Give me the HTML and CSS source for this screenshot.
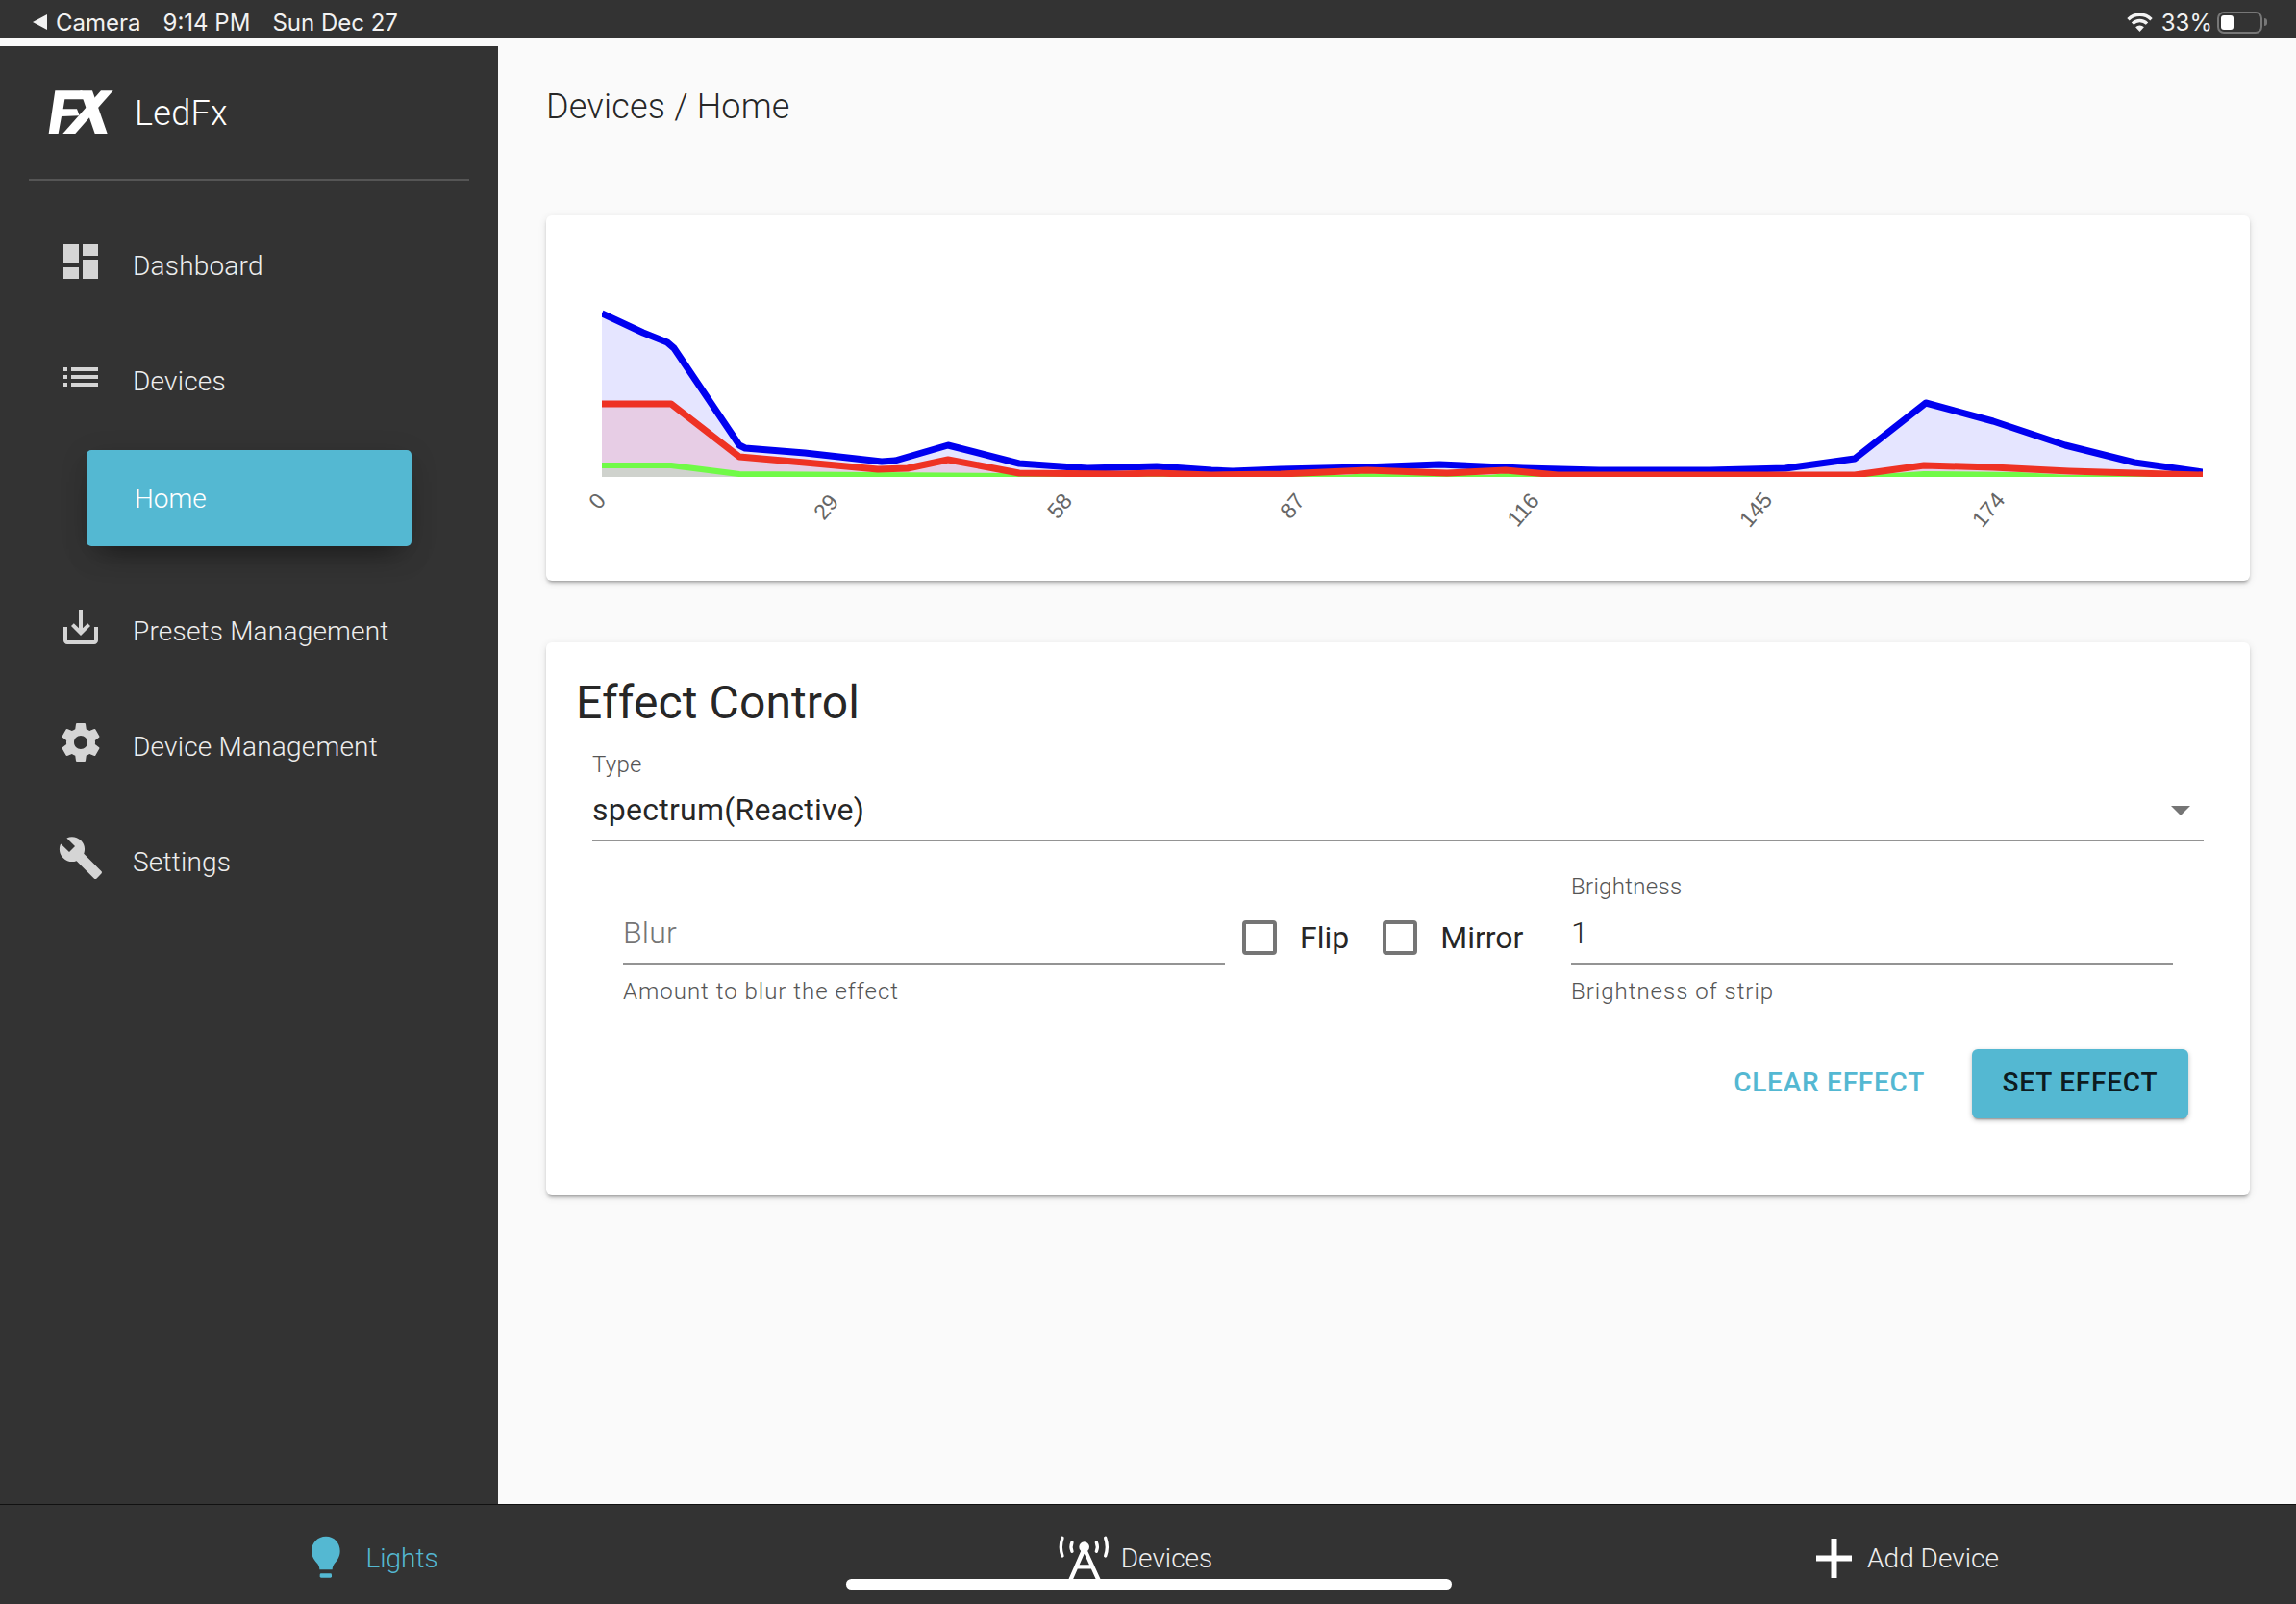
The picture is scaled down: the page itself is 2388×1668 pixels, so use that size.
FILE: index.html
```html
<!DOCTYPE html>
<html lang="en">
<head>
  <meta charset="UTF-8" />
  <meta name="viewport" content="width=device-width, initial-scale=1.0" />
  <title>LedFx</title>
  <link rel="stylesheet" href="styles.css">
</head>
<body>

  <div class="status-bar">
    <div class="status-left">
      <svg class="back-arrow" viewBox="0 0 15 16"><polygon points="15,0 15,16 0,8" /></svg>
      <span class="status-camera">Camera</span>
      <span class="status-time">9:14 PM</span>
      <span class="status-date">Sun Dec 27</span>
    </div>
    <div class="status-right">
      <svg class="wifi" viewBox="0 0 27 20">
        <path d="M1.5 7.2a17 17 0 0 1 24 0" />
        <path d="M6 11.6a10.6 10.6 0 0 1 15 0" />
        <path d="M13.5 20l-4.4-4.7a6.2 6.2 0 0 1 8.8 0z" class="wifi-dot" />
      </svg>
      <span>33%</span>
      <div class="battery"><div class="battery-level"></div></div>
      <div class="battery-nub"></div>
    </div>
  </div>

  <div class="layout">
    <div class="sidebar">
      <div class="logo-row">
        <svg class="logo" viewBox="0 0 270 195">
          <polygon points="52,28 136,28 146,55 82,55 77,85 120,85 128,106 72,108 62,162 32,162" />
          <polygon points="130,28 168,28 215,162 176,162" />
          <polygon points="195,28 233,28 115,162 76,162" />
        </svg>
        <span class="logo-text">LedFx</span>
      </div>
      <div class="divider"></div>

      <div class="nav">
        <div class="nav-item">
          <svg class="nav-icon" viewBox="0 0 24 24"><path d="M3 13h8V3H3v10zm0 8h8v-6H3v6zm10 0h8V11h-8v10zm0-18v6h8V3h-8z" /></svg>
          <span>Dashboard</span>
        </div>
        <div class="nav-item">
          <svg class="nav-icon" viewBox="0 0 24 24"><path d="M3 13h2v-2H3v2zm0 4h2v-2H3v2zm0-8h2V7H3v2zm4 4h14v-2H7v2zm0 4h14v-2H7v2zM7 7v2h14V7H7z" /></svg>
          <span>Devices</span>
        </div>
        <div class="nav-sub">Home</div>
        <div class="nav-item">
          <svg class="nav-icon" viewBox="0 0 24 24"><path d="M19 12v7H5v-7H3v7c0 1.1.9 2 2 2h14c1.1 0 2-.9 2-2v-7h-2zm-6 .67l2.59-2.58L17 11.5l-5 5-5-5 1.41-1.41L11 12.67V3h2z" /></svg>
          <span>Presets Management</span>
        </div>
        <div class="nav-item">
          <svg class="nav-icon" viewBox="0 0 24 24"><path d="M19.43 12.98c.04-.32.07-.64.07-.98s-.03-.66-.07-.98l2.11-1.65c.19-.15.24-.42.12-.64l-2-3.46c-.12-.22-.39-.3-.61-.22l-2.49 1c-.52-.4-1.08-.73-1.69-.98l-.38-2.65C14.46 2.18 14.25 2 14 2h-4c-.25 0-.46.18-.49.42l-.38 2.65c-.61.25-1.17.59-1.69.98l-2.49-1c-.23-.09-.49 0-.61.22l-2 3.46c-.13.22-.07.49.12.64l2.11 1.65c-.04.32-.07.65-.07.98s.03.66.07.98l-2.11 1.65c-.19.15-.24.42-.12.64l2 3.46c.12.22.39.3.61.22l2.49-1c.52.4 1.08.73 1.69.98l.38 2.65c.03.24.24.42.49.42h4c.25 0 .46-.18.49-.42l.38-2.65c.61-.25 1.17-.59 1.69-.98l2.49 1c.23.09.49 0 .61-.22l2-3.46c.12-.22.07-.49-.12-.64l-2.11-1.65zM12 15.5c-1.93 0-3.5-1.57-3.5-3.5s1.57-3.5 3.5-3.5 3.5 1.57 3.5 3.5-1.57 3.5-3.5 3.5z" /></svg>
          <span>Device Management</span>
        </div>
        <div class="nav-item">
          <svg class="nav-icon" viewBox="0 0 24 24"><path d="M22.7 19l-9.1-9.1c.9-2.3.4-5-1.5-6.9-2-2-5-2.4-7.4-1.3L9 6 6 9 1.6 4.7C.4 7.1.9 10.1 2.9 12.1c1.9 1.9 4.6 2.4 6.9 1.5l9.1 9.1c.4.4 1 .4 1.4 0l2.3-2.3c.5-.4.5-1.1.1-1.4z" /></svg>
          <span>Settings</span>
        </div>
      </div>
    </div>

    <div class="main">
      <div class="page-title">Devices / Home</div>

      <div class="card chart-card">
        <!-- viewBox uses page coordinates, easier to read the points off -->
        <svg class="chart" viewBox="568 224 1772 380">
          <defs>
            <clipPath id="plot"><rect x="626" y="240" width="1665" height="256" /></clipPath>
          </defs>
          <g clip-path="url(#plot)">
            <polygon class="fill-blue" points="626,326 669,346 694,356 701,362 769,463 775,466 837,471 917,480 931,479 986,463 1060,482 1131,487 1203,485 1260,489 1282,490 1332,488 1418,486 1497,483 1584,487 1663,489 1778,489 1857,487 1929,477 2003,419 2073,438 2148,463 2220,481 2291,491 2291,496 626,496" />
            <polygon class="fill-red" points="626,420 698,420 769,475 837,481 913,488 944,487 986,478 1060,492 1163,493 1203,492 1260,494 1332,493 1422,489 1505,492 1566,489 1620,494 1929,494 2001,484 2073,486 2152,490 2291,494 2291,496 626,496" />
            <polygon class="fill-green" points="626,484 698,484 769,493 1051,495 1060,496 1400,496 1420,494 1480,496 1550,496 1566,494 1600,496 1940,496 2001,492 2100,493 2152,496 626,496" />
            <polyline class="line line-blue" points="626,326 669,346 694,356 701,362 769,463 775,466 837,471 917,480 931,479 986,463 1060,482 1131,487 1203,485 1260,489 1282,490 1332,488 1418,486 1497,483 1584,487 1663,489 1778,489 1857,487 1929,477 2003,419 2073,438 2148,463 2220,481 2291,491" />
            <polyline class="line line-green" points="626,484 698,484 769,493 1051,495 1060,497 1400,497 1420,495 1480,497 1550,497 1566,495 1600,497 1940,497 2001,493 2100,494 2152,497 2291,497" />
            <polyline class="line line-red" points="626,420 698,420 769,475 837,481 913,488 944,487 986,478 1060,492 1163,493 1203,492 1260,494 1332,493 1422,489 1505,492 1566,489 1620,494 1929,494 2001,484 2073,486 2152,490 2291,494" />
          </g>
          <text class="tick" transform="translate(621 521) rotate(-50)">0</text>
          <text class="tick" transform="translate(859 527) rotate(-50)">29</text>
          <text class="tick" transform="translate(1102 526) rotate(-50)">58</text>
          <text class="tick" transform="translate(1344 526) rotate(-50)">87</text>
          <text class="tick" transform="translate(1584 530) rotate(-50)">116</text>
          <text class="tick" transform="translate(1826 530) rotate(-50)">145</text>
          <text class="tick" transform="translate(2068 530) rotate(-50)">174</text>
        </svg>
      </div>

      <div class="card effect-card">
        <h2 class="effect-title">Effect Control</h2>

        <div class="type-field">
          <div class="field-label">Type</div>
          <div class="select-row">
            <span>spectrum(Reactive)</span>
            <div class="select-arrow"></div>
          </div>
        </div>

        <div class="schema-row">
          <div class="field">
            <div class="field-label">&nbsp;</div>
            <div class="field-input placeholder">Blur</div>
            <div class="field-help">Amount to blur the effect</div>
          </div>
          <div class="checks">
            <div class="check-item"><div class="check-box"></div><span>Flip</span></div>
            <div class="check-item"><div class="check-box"></div><span>Mirror</span></div>
          </div>
          <div class="field">
            <div class="field-label">Brightness</div>
            <div class="field-input">1</div>
            <div class="field-help">Brightness of strip</div>
          </div>
        </div>

        <div class="actions">
          <button class="btn-text">CLEAR EFFECT</button>
          <button class="btn-set">SET EFFECT</button>
        </div>
      </div>
    </div>
  </div>

  <div class="bottom-bar">
    <div class="tab tab-active tab-lights">
      <svg class="tab-bulb" viewBox="0 0 150 165">
        <path d="M72 14C46 14 27 34 27 60C27 78 38 90 46 100C50 106 52 112 52 118H92C92 112 94 106 98 100C106 90 116 78 116 60C116 34 98 14 72 14Z" />
        <rect x="53" y="130" width="37" height="13" rx="4" />
      </svg>
      <span>Lights</span>
    </div>
    <div class="tab tab-devices">
      <svg class="tab-tower" viewBox="0 0 210 180">
        <circle cx="110" cy="50" r="16" />
        <path class="tower-legs" d="M110 55L62 165M110 55L160 165M84 112H136" />
        <path class="tower-signal" d="M72 36Q66 50 72 64M148 36Q154 50 148 64M42 22Q32 50 42 78M176 22Q186 50 176 78" />
      </svg>
      <span>Devices</span>
    </div>
    <div class="tab tab-add">
      <svg class="tab-plus" viewBox="0 0 37 41"><path d="M15.5 0h6v17.5H37v6H21.5V41h-6V23.5H0v-6h15.5z" /></svg>
      <span>Add Device</span>
    </div>
  </div>

  <div class="home-indicator"></div>

</body>
</html>
```

FILE: styles.css
```css
body {
  margin: 0;
  width: 2388px;
  height: 1668px;
  display: flex;
  flex-direction: column;
  overflow: hidden;
  position: relative;
  font-family: Roboto, "Liberation Sans", sans-serif;
  background-color: #fafafa;
  color: rgba(0, 0, 0, 0.87);
}

/* status bar */
.status-bar {
  height: 40px;
  flex-shrink: 0;
  display: flex;
  justify-content: space-between;
  align-items: center;
  padding: 0 30px 0 34px;
  background-color: #333;
  color: #f2f2f2;
  font-family: Inter, "Liberation Sans", sans-serif;
  font-size: 24px;
}
.status-left {
  display: flex;
  align-items: center;
  padding-top: 6px;
}
.back-arrow {
  width: 15px;
  height: 16px;
  fill: #f2f2f2;
  margin-right: 9px;
}
.status-time {
  margin-left: 23px;
}
.status-date {
  margin-left: 23px;
}
.status-right {
  display: flex;
  align-items: center;
  padding-top: 6px;
}
.wifi {
  width: 27px;
  height: 20px;
  margin-right: 9px;
  fill: none;
  stroke: #f2f2f2;
  stroke-width: 3.4;
}
.wifi-dot {
  fill: #f2f2f2;
  stroke: none;
}
.battery {
  width: 47px;
  height: 23px;
  box-sizing: border-box;
  margin-left: 5px;
  padding: 2px;
  border: 2px solid #777;
  border-radius: 7px;
}
.battery-level {
  width: 13px;
  height: 15px;
  background-color: #fff;
  border-radius: 3px;
}
.battery-nub {
  width: 3px;
  height: 8px;
  margin-left: 2px;
  background-color: #777;
  border-radius: 0 3px 3px 0;
}

.layout {
  flex: 1;
  display: flex;
  min-height: 0;
}

/* sidebar */
.sidebar {
  width: 518px;
  flex-shrink: 0;
  margin-top: 8px;
  background-color: #333;
  color: #eee;
}
.logo-row {
  height: 138px;
  display: flex;
  align-items: center;
  padding-left: 40px;
}
.logo {
  width: 90px;
  height: 65px;
  fill: #fff;
  margin-right: 10px;
}
.logo-text {
  font-size: 36px;
  color: #fff;
  font-weight: 300;
  letter-spacing: 0.3px;
  margin-top: 2px;
}
.divider {
  height: 2px;
  margin: 0 30px;
  background-color: #555;
}
.nav {
  padding-top: 38px;
}
.nav-item {
  height: 100px;
  margin-bottom: 20px;
  padding-left: 60px;
  display: flex;
  align-items: center;
  font-size: 28px;
  font-weight: 300;
  letter-spacing: 0.2px;
}
.nav-item span {
  margin-left: 30px;
}
.nav-icon {
  width: 48px;
  height: 48px;
  fill: #d5d5d5;
  margin-top: -8px;
}
.nav-sub {
  height: 100px;
  margin: 22px 90px 38px 90px;
  padding-left: 50px;
  display: flex;
  align-items: center;
  background-color: #54b8d2;
  border-radius: 5px;
  color: #fff;
  font-size: 28px;
  font-weight: 300;
  box-shadow: 0 18px 30px -15px rgba(0, 0, 0, 0.5), 0 6px 30px 0 rgba(0, 0, 0, 0.12);
}

/* main content */
.main {
  flex: 1;
  min-width: 0;
  padding: 47px 48px 0 50px;
}
.page-title {
  height: 48px;
  line-height: 48px;
  margin-bottom: 89px;
  font-size: 36px;
  font-weight: 300;
  letter-spacing: 0.2px;
}
.card {
  background-color: #fff;
  border-radius: 6px;
  box-shadow: 0 3px 3px 0 rgba(0, 0, 0, 0.14), 0 4px 2px -3px rgba(0, 0, 0, 0.2), 0 2px 8px 0 rgba(0, 0, 0, 0.1);
}
.chart-card {
  height: 380px;
  margin-bottom: 64px;
}
.chart {
  display: block;
  width: 1772px;
  height: 380px;
}
.fill-blue {
  fill: rgba(0, 0, 255, 0.1);
}
.fill-red {
  fill: rgba(255, 0, 0, 0.1);
}
.fill-green {
  fill: rgba(0, 255, 0, 0.1);
}
.line {
  fill: none;
  stroke-width: 7;
  stroke-linejoin: round;
}
.line-blue {
  stroke: #0000f0;
}
.line-red {
  stroke: #ee3224;
}
.line-green {
  stroke: #70fa47;
  stroke-width: 6;
}
.tick {
  font-family: "Liberation Sans", sans-serif;
  font-size: 23px;
  fill: #666;
  text-anchor: middle;
  dominant-baseline: central;
}

/* effect control */
.effect-card {
  padding: 33px 34px 80px 34px;
}
.effect-title {
  margin: 0 0 19px -3px;
  font-size: 48px;
  line-height: 60px;
  font-weight: 400;
  letter-spacing: 0.1px;
}
.type-field {
  margin: 0 14px;
}
.field-label {
  font-size: 24px;
  line-height: 30px;
  font-weight: 300;
  color: #555;
  letter-spacing: 0.3px;
}
.select-row {
  display: flex;
  justify-content: space-between;
  align-items: center;
  height: 44px;
  margin-top: 9px;
  padding: 0 14px 10px 0;
  border-bottom: 2px solid #949494;
  font-size: 32px;
  letter-spacing: 0.25px;
}
.select-row span {
  margin-top: 2px;
}
.select-arrow {
  width: 0;
  height: 0;
  margin-top: 3px;
  border-left: 10px solid transparent;
  border-right: 10px solid transparent;
  border-top: 10px solid #757575;
}
.schema-row {
  display: flex;
  margin: 32px 46px 0 46px;
}
.field {
  flex: 1;
}
.field-input {
  height: 44px;
  line-height: 44px;
  margin-top: 11px;
  padding-bottom: 9px;
  border-bottom: 2px solid #949494;
  font-size: 32px;
  font-weight: 300;
  letter-spacing: 0.2px;
}
.field-input.placeholder {
  color: #757575;
}
.field-help {
  margin-top: 13px;
  font-size: 24px;
  line-height: 30px;
  font-weight: 300;
  color: #555;
  letter-spacing: 1px;
}
.checks {
  width: 360px;
  box-sizing: border-box;
  padding: 50px 0 0 18px;
  display: flex;
  gap: 35px;
}
.check-item {
  display: flex;
  align-items: center;
  height: 36px;
  font-size: 32px;
}
.check-box {
  width: 36px;
  height: 36px;
  box-sizing: border-box;
  margin-right: 24px;
  border: 4px solid #757575;
  border-radius: 4px;
}
.actions {
  display: flex;
  justify-content: flex-end;
  align-items: center;
  margin: 45px 30px 0 0;
}
.btn-text {
  margin-right: 49px;
  padding: 0 0 4px 0;
  border: none;
  background: none;
  color: #54b8d2;
  font-family: inherit;
  font-size: 28px;
  font-weight: 500;
  letter-spacing: 0.75px;
}
.btn-set {
  width: 225px;
  height: 72px;
  padding: 0 0 3px 0;
  border: none;
  border-radius: 6px;
  background-color: #54b8d2;
  color: rgba(0, 0, 0, 0.87);
  font-family: inherit;
  font-size: 28px;
  font-weight: 500;
  letter-spacing: 0.8px;
  box-shadow: 0 3px 2px -2px rgba(0, 0, 0, 0.3), 0 2px 5px 0 rgba(0, 0, 0, 0.25);
}

/* bottom tabs */
.bottom-bar {
  height: 103px;
  flex-shrink: 0;
  display: grid;
  grid-template-columns: 1fr 1fr 1fr;
  border-top: 1px solid #111;
  background-color: #333;
  color: #eee;
  font-size: 28px;
  font-weight: 300;
}
.tab {
  display: flex;
  justify-content: center;
  align-items: center;
  padding-top: 7px;
}
.tab-active {
  color: #54b8d2;
}
.tab-lights {
  padding-right: 25px;
}
.tab-devices {
  padding-right: 36px;
}
.tab-add {
  padding-right: 12px;
}
.tab-bulb {
  width: 50px;
  height: 55px;
  fill: #54b8d2;
  margin-right: 15px;
}
.tab-tower {
  width: 70px;
  height: 60px;
  margin: 4px 5px 0 0;
  fill: #fff;
}
.tower-legs {
  fill: none;
  stroke: #fff;
  stroke-width: 13;
}
.tower-signal {
  fill: none;
  stroke: #fff;
  stroke-width: 10;
  stroke-linecap: round;
}
.tab-plus {
  width: 37px;
  height: 41px;
  fill: #fff;
  margin-right: 16px;
}
.home-indicator {
  position: absolute;
  left: 880px;
  top: 1642px;
  width: 630px;
  height: 11px;
  background-color: #fff;
  border-radius: 6px;
}
```
